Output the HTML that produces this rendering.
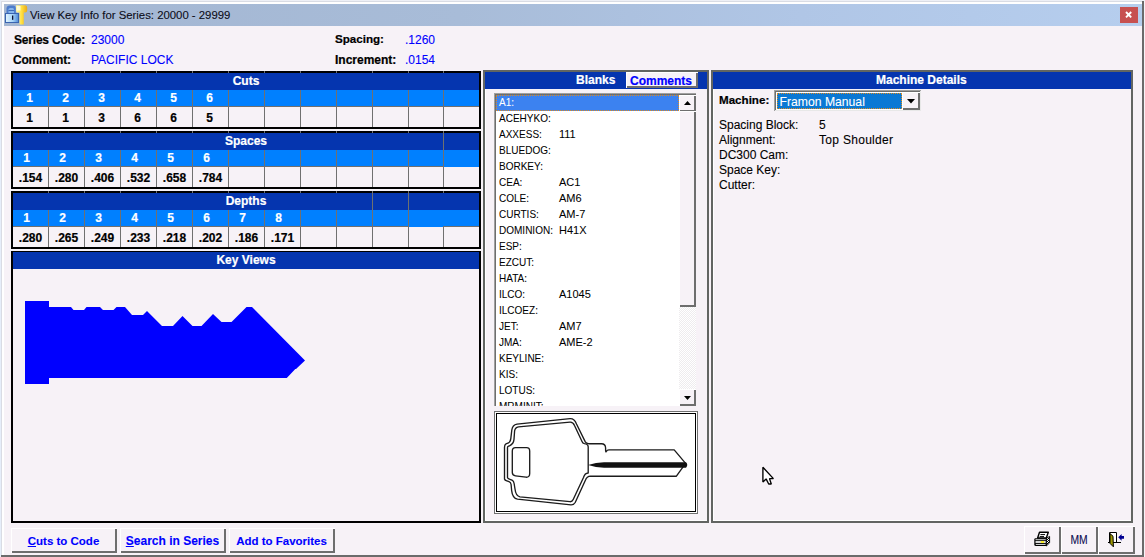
<!DOCTYPE html>
<html><head><meta charset="utf-8">
<style>
*{margin:0;padding:0;box-sizing:border-box}
html,body{width:1145px;height:557px;overflow:hidden;background:#F7F2F7;font-family:"Liberation Sans",sans-serif;font-size:12px;color:#000}
.a{position:absolute}
.t{position:absolute;white-space:nowrap;line-height:14px;-webkit-text-stroke:0.1px currentColor}
.b{font-weight:bold;-webkit-text-stroke:0.2px currentColor}
.blue{color:#0000FF}
.w{color:#fff}
svg{position:absolute;overflow:visible}
</style></head>
<body>
<div class="a" style="left:0px;top:0px;width:1145px;height:557px;background:#F7F2F7;"></div>
<div class="a" style="left:0px;top:0px;width:1145px;height:1px;background:#EEF0F6;"></div>
<div class="a" style="left:0px;top:0px;width:1px;height:557px;background:#E6EEFA;"></div>
<div class="a" style="left:1px;top:1px;width:1141px;height:1px;background:#D9DCE4;"></div>
<div class="a" style="left:1px;top:1px;width:1px;height:554px;background:#D9DCE4;"></div>
<div class="a" style="left:2px;top:2px;width:1140px;height:2px;background:#FFFFFF;"></div>
<div class="a" style="left:2px;top:2px;width:2px;height:553px;background:#FFFFFF;"></div>
<div class="a" style="left:1142px;top:1px;width:2px;height:556px;background:#6B6B6B;"></div>
<div class="a" style="left:1px;top:555px;width:1143px;height:2px;background:#6B6B6B;"></div>
<div class="a" style="left:4px;top:4px;width:1138px;height:22px;background:linear-gradient(to right,#A3B6D2 0%,#A8BCD8 40%,#B0C6E6 70%,#B6CEEE 100%);"></div>
<div class="t " style="left:30px;top:8px;font-size:11.35px;color:#0C0C18;-webkit-text-stroke:0.1px #0C0C18;top:7.5px">View Key Info for Series: 20000 - 29999</div>
<div class="a" style="left:1120px;top:7px;width:18px;height:16px;background:#C75050;"></div>
<svg style="left:0;top:0" width="1145" height="40"><path d="M1126 12 L1131.2 17.4 M1131.2 12 L1126 17.4" stroke="#fff" stroke-width="1.9"/></svg>
<svg style="left:0;top:0" width="40" height="30" viewBox="0 0 40 30">
<defs>
<linearGradient id="lk" x1="0" x2="1" y1="0" y2="0"><stop offset="0" stop-color="#E4F6FF"/><stop offset="0.55" stop-color="#A8D4F8"/><stop offset="1" stop-color="#4C88D8"/></linearGradient>
<linearGradient id="ky" x1="0" x2="1" y1="0" y2="0"><stop offset="0" stop-color="#FFF8B0"/><stop offset="0.5" stop-color="#FFE040"/><stop offset="1" stop-color="#E8A818"/></linearGradient>
</defs>
<path d="M6.5 13.5 V8.5 Q6.5 5.5 10 5.5 H13 Q15.8 5.5 15.8 8.5 V13.5 Z" fill="#4C7CCC"/>
<path d="M8.5 13.5 V9.5 Q8.5 8 10.2 8 H12.6 Q14 8 14 9.5 V13.5 Z" fill="#86B4EC"/>
<path d="M8.5 10.5 H14" stroke="#3E6AB8" stroke-width="1"/>
<rect x="5.5" y="13.5" width="13" height="9" fill="url(#lk)" stroke="#3A64B0" stroke-width="1"/>
<rect x="12" y="15.5" width="1.3" height="4.3" fill="#0A1030"/>
<path d="M16.5 5.2 H25 Q27.2 5.2 27.2 8 V10 Q27.2 12.6 24.5 12.6 H23.8 V24.6 H19.6 V12.6 H18.8 Q16 12.6 16 10 V6 Q16 5.2 16.5 5.2 Z" fill="url(#ky)"/>
<path d="M17 6 H20.5 V10.5 H17 Z" fill="#FFFFF0" opacity="0.75"/>
</svg>
<div class="t b" style="left:14px;top:33px;letter-spacing:-0.2px">Series Code:</div>
<div class="t blue" style="left:91px;top:33px;">23000</div>
<div class="t b" style="left:13px;top:53px;letter-spacing:-0.2px">Comment:</div>
<div class="t blue" style="left:91px;top:53px;">PACIFIC LOCK</div>
<div class="t b" style="left:335px;top:32px;font-size:11.6px">Spacing:</div>
<div class="t blue" style="left:405px;top:33px;">.1260</div>
<div class="t b" style="left:335px;top:53px;">Increment:</div>
<div class="t blue" style="left:405px;top:53px;">.0154</div>
<div class="a" style="left:11px;top:71px;width:470px;height:58px;background:#000;"></div>
<div class="a" style="left:13px;top:73px;width:466px;height:17px;background:#0535AF;"></div>
<div class="a" style="left:13px;top:90px;width:466px;height:17px;background:#0080FF;"></div>
<div class="a" style="left:13px;top:106px;width:466px;height:1px;background:#707070;"></div>
<div class="a" style="left:13px;top:107px;width:466px;height:20px;background:#F7F2F7;"></div>
<div class="a" style="left:48px;top:71px;width:1px;height:2px;background:#707070;"></div>
<div class="a" style="left:48px;top:90px;width:1px;height:37px;background:#707070;"></div>
<div class="a" style="left:84px;top:71px;width:1px;height:2px;background:#707070;"></div>
<div class="a" style="left:84px;top:90px;width:1px;height:37px;background:#707070;"></div>
<div class="a" style="left:120px;top:71px;width:1px;height:2px;background:#707070;"></div>
<div class="a" style="left:120px;top:90px;width:1px;height:37px;background:#707070;"></div>
<div class="a" style="left:156px;top:71px;width:1px;height:2px;background:#707070;"></div>
<div class="a" style="left:156px;top:90px;width:1px;height:37px;background:#707070;"></div>
<div class="a" style="left:192px;top:71px;width:1px;height:2px;background:#707070;"></div>
<div class="a" style="left:192px;top:90px;width:1px;height:37px;background:#707070;"></div>
<div class="a" style="left:228px;top:71px;width:1px;height:2px;background:#707070;"></div>
<div class="a" style="left:228px;top:90px;width:1px;height:37px;background:#707070;"></div>
<div class="a" style="left:264px;top:71px;width:1px;height:2px;background:#707070;"></div>
<div class="a" style="left:264px;top:90px;width:1px;height:37px;background:#707070;"></div>
<div class="a" style="left:300px;top:71px;width:1px;height:2px;background:#707070;"></div>
<div class="a" style="left:300px;top:90px;width:1px;height:37px;background:#707070;"></div>
<div class="a" style="left:336px;top:71px;width:1px;height:2px;background:#707070;"></div>
<div class="a" style="left:336px;top:90px;width:1px;height:37px;background:#707070;"></div>
<div class="a" style="left:372px;top:71px;width:1px;height:2px;background:#707070;"></div>
<div class="a" style="left:372px;top:90px;width:1px;height:37px;background:#707070;"></div>
<div class="a" style="left:408px;top:71px;width:1px;height:2px;background:#707070;"></div>
<div class="a" style="left:408px;top:90px;width:1px;height:37px;background:#707070;"></div>
<div class="a" style="left:443px;top:71px;width:1px;height:2px;background:#707070;"></div>
<div class="a" style="left:443px;top:90px;width:1px;height:37px;background:#707070;"></div>
<div class="t b w" style="left:13px;top:74px;width:466px;text-align:center;">Cuts</div>
<div class="t b w" style="left:12px;top:91px;width:35px;text-align:center;">1</div>
<div class="t b w" style="left:48px;top:91px;width:35px;text-align:center;">2</div>
<div class="t b w" style="left:84px;top:91px;width:35px;text-align:center;">3</div>
<div class="t b w" style="left:120px;top:91px;width:35px;text-align:center;">4</div>
<div class="t b w" style="left:156px;top:91px;width:35px;text-align:center;">5</div>
<div class="t b w" style="left:192px;top:91px;width:35px;text-align:center;">6</div>
<div class="t b" style="left:12px;top:111px;width:35px;text-align:center;">1</div>
<div class="t b" style="left:48px;top:111px;width:35px;text-align:center;">1</div>
<div class="t b" style="left:84px;top:111px;width:35px;text-align:center;">3</div>
<div class="t b" style="left:120px;top:111px;width:35px;text-align:center;">6</div>
<div class="t b" style="left:156px;top:111px;width:35px;text-align:center;">6</div>
<div class="t b" style="left:192px;top:111px;width:35px;text-align:center;">5</div>
<div class="a" style="left:11px;top:131px;width:470px;height:58px;background:#000;"></div>
<div class="a" style="left:13px;top:133px;width:466px;height:17px;background:#0535AF;"></div>
<div class="a" style="left:13px;top:150px;width:466px;height:17px;background:#0080FF;"></div>
<div class="a" style="left:13px;top:166px;width:430px;height:1px;background:#707070;"></div>
<div class="a" style="left:479px;top:166px;width:0px;height:1px;background:#707070;"></div>
<div class="a" style="left:13px;top:167px;width:466px;height:20px;background:#F7F2F7;"></div>
<div class="a" style="left:48px;top:131px;width:1px;height:2px;background:#707070;"></div>
<div class="a" style="left:48px;top:150px;width:1px;height:37px;background:#707070;"></div>
<div class="a" style="left:84px;top:131px;width:1px;height:2px;background:#707070;"></div>
<div class="a" style="left:84px;top:150px;width:1px;height:37px;background:#707070;"></div>
<div class="a" style="left:120px;top:131px;width:1px;height:2px;background:#707070;"></div>
<div class="a" style="left:120px;top:150px;width:1px;height:37px;background:#707070;"></div>
<div class="a" style="left:156px;top:131px;width:1px;height:2px;background:#707070;"></div>
<div class="a" style="left:156px;top:150px;width:1px;height:37px;background:#707070;"></div>
<div class="a" style="left:192px;top:131px;width:1px;height:2px;background:#707070;"></div>
<div class="a" style="left:192px;top:150px;width:1px;height:37px;background:#707070;"></div>
<div class="a" style="left:228px;top:131px;width:1px;height:2px;background:#707070;"></div>
<div class="a" style="left:228px;top:150px;width:1px;height:37px;background:#707070;"></div>
<div class="a" style="left:264px;top:131px;width:1px;height:2px;background:#707070;"></div>
<div class="a" style="left:264px;top:150px;width:1px;height:37px;background:#707070;"></div>
<div class="a" style="left:300px;top:131px;width:1px;height:2px;background:#707070;"></div>
<div class="a" style="left:300px;top:150px;width:1px;height:37px;background:#707070;"></div>
<div class="a" style="left:336px;top:131px;width:1px;height:2px;background:#707070;"></div>
<div class="a" style="left:336px;top:150px;width:1px;height:37px;background:#707070;"></div>
<div class="a" style="left:372px;top:131px;width:1px;height:2px;background:#707070;"></div>
<div class="a" style="left:372px;top:150px;width:1px;height:37px;background:#707070;"></div>
<div class="a" style="left:408px;top:131px;width:1px;height:2px;background:#707070;"></div>
<div class="a" style="left:408px;top:150px;width:1px;height:37px;background:#707070;"></div>
<div class="a" style="left:443px;top:131px;width:1px;height:2px;background:#707070;"></div>
<div class="a" style="left:443px;top:133px;width:1px;height:54px;background:#707070;"></div>
<div class="t b w" style="left:13px;top:134px;width:466px;text-align:center;">Spaces</div>
<div class="t b w" style="left:9px;top:151px;width:35px;text-align:center;">1</div>
<div class="t b w" style="left:45px;top:151px;width:35px;text-align:center;">2</div>
<div class="t b w" style="left:81px;top:151px;width:35px;text-align:center;">3</div>
<div class="t b w" style="left:117px;top:151px;width:35px;text-align:center;">4</div>
<div class="t b w" style="left:153px;top:151px;width:35px;text-align:center;">5</div>
<div class="t b w" style="left:189px;top:151px;width:35px;text-align:center;">6</div>
<div class="t b" style="left:13px;top:171px;width:35px;text-align:center;">.154</div>
<div class="t b" style="left:49px;top:171px;width:35px;text-align:center;">.280</div>
<div class="t b" style="left:85px;top:171px;width:35px;text-align:center;">.406</div>
<div class="t b" style="left:121px;top:171px;width:35px;text-align:center;">.532</div>
<div class="t b" style="left:157px;top:171px;width:35px;text-align:center;">.658</div>
<div class="t b" style="left:193px;top:171px;width:35px;text-align:center;">.784</div>
<div class="a" style="left:11px;top:191px;width:470px;height:58px;background:#000;"></div>
<div class="a" style="left:13px;top:193px;width:466px;height:17px;background:#0535AF;"></div>
<div class="a" style="left:13px;top:210px;width:466px;height:17px;background:#0080FF;"></div>
<div class="a" style="left:13px;top:226px;width:395px;height:1px;background:#707070;"></div>
<div class="a" style="left:443px;top:226px;width:36px;height:1px;background:#707070;"></div>
<div class="a" style="left:13px;top:227px;width:466px;height:20px;background:#F7F2F7;"></div>
<div class="a" style="left:48px;top:191px;width:1px;height:2px;background:#707070;"></div>
<div class="a" style="left:48px;top:210px;width:1px;height:37px;background:#707070;"></div>
<div class="a" style="left:84px;top:191px;width:1px;height:2px;background:#707070;"></div>
<div class="a" style="left:84px;top:210px;width:1px;height:37px;background:#707070;"></div>
<div class="a" style="left:120px;top:191px;width:1px;height:2px;background:#707070;"></div>
<div class="a" style="left:120px;top:210px;width:1px;height:37px;background:#707070;"></div>
<div class="a" style="left:156px;top:191px;width:1px;height:2px;background:#707070;"></div>
<div class="a" style="left:156px;top:210px;width:1px;height:37px;background:#707070;"></div>
<div class="a" style="left:192px;top:191px;width:1px;height:2px;background:#707070;"></div>
<div class="a" style="left:192px;top:210px;width:1px;height:37px;background:#707070;"></div>
<div class="a" style="left:228px;top:191px;width:1px;height:2px;background:#707070;"></div>
<div class="a" style="left:228px;top:210px;width:1px;height:37px;background:#707070;"></div>
<div class="a" style="left:264px;top:191px;width:1px;height:2px;background:#707070;"></div>
<div class="a" style="left:264px;top:210px;width:1px;height:37px;background:#707070;"></div>
<div class="a" style="left:300px;top:191px;width:1px;height:2px;background:#707070;"></div>
<div class="a" style="left:300px;top:210px;width:1px;height:37px;background:#707070;"></div>
<div class="a" style="left:336px;top:191px;width:1px;height:2px;background:#707070;"></div>
<div class="a" style="left:336px;top:210px;width:1px;height:37px;background:#707070;"></div>
<div class="a" style="left:372px;top:191px;width:1px;height:2px;background:#707070;"></div>
<div class="a" style="left:372px;top:193px;width:1px;height:54px;background:#707070;"></div>
<div class="a" style="left:408px;top:191px;width:1px;height:2px;background:#707070;"></div>
<div class="a" style="left:408px;top:193px;width:1px;height:54px;background:#707070;"></div>
<div class="a" style="left:443px;top:191px;width:1px;height:2px;background:#707070;"></div>
<div class="a" style="left:443px;top:226px;width:1px;height:21px;background:#707070;"></div>
<div class="t b w" style="left:13px;top:194px;width:466px;text-align:center;">Depths</div>
<div class="t b w" style="left:9px;top:211px;width:35px;text-align:center;">1</div>
<div class="t b w" style="left:45px;top:211px;width:35px;text-align:center;">2</div>
<div class="t b w" style="left:81px;top:211px;width:35px;text-align:center;">3</div>
<div class="t b w" style="left:117px;top:211px;width:35px;text-align:center;">4</div>
<div class="t b w" style="left:153px;top:211px;width:35px;text-align:center;">5</div>
<div class="t b w" style="left:189px;top:211px;width:35px;text-align:center;">6</div>
<div class="t b w" style="left:225px;top:211px;width:35px;text-align:center;">7</div>
<div class="t b w" style="left:261px;top:211px;width:35px;text-align:center;">8</div>
<div class="t b" style="left:13px;top:231px;width:35px;text-align:center;">.280</div>
<div class="t b" style="left:49px;top:231px;width:35px;text-align:center;">.265</div>
<div class="t b" style="left:85px;top:231px;width:35px;text-align:center;">.249</div>
<div class="t b" style="left:121px;top:231px;width:35px;text-align:center;">.233</div>
<div class="t b" style="left:157px;top:231px;width:35px;text-align:center;">.218</div>
<div class="t b" style="left:193px;top:231px;width:35px;text-align:center;">.202</div>
<div class="t b" style="left:229px;top:231px;width:35px;text-align:center;">.186</div>
<div class="t b" style="left:265px;top:231px;width:35px;text-align:center;">.171</div>
<div class="a" style="left:11px;top:251px;width:470px;height:272px;background:#000;"></div>
<div class="a" style="left:13px;top:252px;width:466px;height:17px;background:#0535AF;"></div>
<div class="a" style="left:13px;top:269px;width:466px;height:252px;background:#F7F2F7;"></div>
<div class="t b w" style="left:13px;top:253px;width:466px;text-align:center;">Key Views</div>
<svg style="left:0;top:0" width="1145" height="557" viewBox="0 0 1145 557">
<path fill="#0000FF" d="M25 301 H49 V307 H71 L73.5 310 H84 L86.5 307 H100 L103 310 H113.5 L116.5 307 H125 L132 315 H143 L147 311 L162 326 H173 L182.5 316 L192.5 326 H201.5 L213 314 L221.5 322 H231.5 L246.5 307 H252 L305 360.5 L296 369 H295.3 L286.8 378 H49 V384 H25 Z"/>
</svg>
<div class="a" style="left:11px;top:528px;width:106px;height:25px;background:#FFFFFF;"></div>
<div class="a" style="left:12px;top:529px;width:105px;height:24px;background:#6E6E6E;"></div>
<div class="a" style="left:12px;top:529px;width:103px;height:22px;background:#F7F2F7;"></div>
<div class="t" style="left:11px;top:528px;width:105px;height:24px;display:flex;align-items:center;justify-content:center;font-weight:bold;color:#0000FF;font-size:11.5px;padding-top:1px"><u>C</u>uts to Code</div>
<div class="a" style="left:120px;top:528px;width:106px;height:25px;background:#FFFFFF;"></div>
<div class="a" style="left:121px;top:529px;width:105px;height:24px;background:#6E6E6E;"></div>
<div class="a" style="left:121px;top:529px;width:103px;height:22px;background:#F7F2F7;"></div>
<div class="t" style="left:120px;top:528px;width:105px;height:24px;display:flex;align-items:center;justify-content:center;font-weight:bold;color:#0000FF;font-size:12px;padding-top:1px"><u>S</u>earch in Series</div>
<div class="a" style="left:229px;top:528px;width:106px;height:25px;background:#FFFFFF;"></div>
<div class="a" style="left:230px;top:529px;width:105px;height:24px;background:#6E6E6E;"></div>
<div class="a" style="left:230px;top:529px;width:103px;height:22px;background:#F7F2F7;"></div>
<div class="t" style="left:229px;top:528px;width:105px;height:24px;display:flex;align-items:center;justify-content:center;font-weight:bold;color:#0000FF;font-size:11.5px;padding-top:1px">Add to Favorites</div>
<div class="a" style="left:483px;top:70px;width:226px;height:453px;background:#626562;"></div>
<div class="a" style="left:485px;top:72px;width:222px;height:449px;background:#FFFFFF;"></div>
<div class="a" style="left:486px;top:72px;width:221px;height:448px;background:#F7F2F7;"></div>
<div class="a" style="left:485px;top:72px;width:222px;height:17px;background:#0535AF;"></div>
<div class="t b w" style="left:576px;top:73px;">Blanks</div>
<div class="a" style="left:626px;top:72px;width:72px;height:16px;background:#FFFFFF;"></div>
<div class="a" style="left:627px;top:73px;width:71px;height:15px;background:#6E6E6E;"></div>
<div class="a" style="left:627px;top:73px;width:69px;height:13px;background:#F7F2F7;"></div>
<div class="t b blue" style="left:630px;top:74px;">Comments</div>
<div class="a" style="left:494px;top:93px;width:202px;height:313px;background:#A0A0A0;"></div>
<div class="a" style="left:495px;top:94px;width:201px;height:312px;background:#6E6E6E;"></div>
<div class="a" style="left:496px;top:95px;width:183px;height:311px;background:#FFFFFF;"></div>
<div class="a" style="left:496px;top:95px;width:183px;height:16px;background:#3C82F0;"></div>
<div class="a" style="left:496px;top:95px;width:183px;height:16px;border:1px dotted #E08A1E"></div>
<div class="a" style="left:496px;top:95px;width:183px;height:311px;overflow:hidden">
<div class="t" style="left:3px;top:0px;font-size:11px;color:#FFFFFF;transform:scaleX(0.91);transform-origin:0 0;-webkit-text-stroke:0.05px #FFFFFF">A1:</div>
<div class="t" style="left:3px;top:16px;font-size:11px;color:#000000;transform:scaleX(0.91);transform-origin:0 0;-webkit-text-stroke:0.05px #000000">ACEHYKO:</div>
<div class="t" style="left:3px;top:32px;font-size:11px;color:#000000;transform:scaleX(0.91);transform-origin:0 0;-webkit-text-stroke:0.05px #000000">AXXESS:</div>
<div class="t" style="left:63px;top:32px;font-size:11px;color:#000000;-webkit-text-stroke:0.05px #000000">111</div>
<div class="t" style="left:3px;top:48px;font-size:11px;color:#000000;transform:scaleX(0.91);transform-origin:0 0;-webkit-text-stroke:0.05px #000000">BLUEDOG:</div>
<div class="t" style="left:3px;top:64px;font-size:11px;color:#000000;transform:scaleX(0.91);transform-origin:0 0;-webkit-text-stroke:0.05px #000000">BORKEY:</div>
<div class="t" style="left:3px;top:80px;font-size:11px;color:#000000;transform:scaleX(0.91);transform-origin:0 0;-webkit-text-stroke:0.05px #000000">CEA:</div>
<div class="t" style="left:63px;top:80px;font-size:11px;color:#000000;-webkit-text-stroke:0.05px #000000">AC1</div>
<div class="t" style="left:3px;top:96px;font-size:11px;color:#000000;transform:scaleX(0.91);transform-origin:0 0;-webkit-text-stroke:0.05px #000000">COLE:</div>
<div class="t" style="left:63px;top:96px;font-size:11px;color:#000000;-webkit-text-stroke:0.05px #000000">AM6</div>
<div class="t" style="left:3px;top:112px;font-size:11px;color:#000000;transform:scaleX(0.91);transform-origin:0 0;-webkit-text-stroke:0.05px #000000">CURTIS:</div>
<div class="t" style="left:63px;top:112px;font-size:11px;color:#000000;-webkit-text-stroke:0.05px #000000">AM-7</div>
<div class="t" style="left:3px;top:128px;font-size:11px;color:#000000;transform:scaleX(0.91);transform-origin:0 0;-webkit-text-stroke:0.05px #000000">DOMINION:</div>
<div class="t" style="left:63px;top:128px;font-size:11px;color:#000000;-webkit-text-stroke:0.05px #000000">H41X</div>
<div class="t" style="left:3px;top:144px;font-size:11px;color:#000000;transform:scaleX(0.91);transform-origin:0 0;-webkit-text-stroke:0.05px #000000">ESP:</div>
<div class="t" style="left:3px;top:160px;font-size:11px;color:#000000;transform:scaleX(0.91);transform-origin:0 0;-webkit-text-stroke:0.05px #000000">EZCUT:</div>
<div class="t" style="left:3px;top:176px;font-size:11px;color:#000000;transform:scaleX(0.91);transform-origin:0 0;-webkit-text-stroke:0.05px #000000">HATA:</div>
<div class="t" style="left:3px;top:192px;font-size:11px;color:#000000;transform:scaleX(0.91);transform-origin:0 0;-webkit-text-stroke:0.05px #000000">ILCO:</div>
<div class="t" style="left:63px;top:192px;font-size:11px;color:#000000;-webkit-text-stroke:0.05px #000000">A1045</div>
<div class="t" style="left:3px;top:208px;font-size:11px;color:#000000;transform:scaleX(0.91);transform-origin:0 0;-webkit-text-stroke:0.05px #000000">ILCOEZ:</div>
<div class="t" style="left:3px;top:224px;font-size:11px;color:#000000;transform:scaleX(0.91);transform-origin:0 0;-webkit-text-stroke:0.05px #000000">JET:</div>
<div class="t" style="left:63px;top:224px;font-size:11px;color:#000000;-webkit-text-stroke:0.05px #000000">AM7</div>
<div class="t" style="left:3px;top:240px;font-size:11px;color:#000000;transform:scaleX(0.91);transform-origin:0 0;-webkit-text-stroke:0.05px #000000">JMA:</div>
<div class="t" style="left:63px;top:240px;font-size:11px;color:#000000;-webkit-text-stroke:0.05px #000000">AME-2</div>
<div class="t" style="left:3px;top:256px;font-size:11px;color:#000000;transform:scaleX(0.91);transform-origin:0 0;-webkit-text-stroke:0.05px #000000">KEYLINE:</div>
<div class="t" style="left:3px;top:272px;font-size:11px;color:#000000;transform:scaleX(0.91);transform-origin:0 0;-webkit-text-stroke:0.05px #000000">KIS:</div>
<div class="t" style="left:3px;top:288px;font-size:11px;color:#000000;transform:scaleX(0.91);transform-origin:0 0;-webkit-text-stroke:0.05px #000000">LOTUS:</div>
<div class="t" style="left:3px;top:304px;font-size:11px;color:#000000;transform:scaleX(0.91);transform-origin:0 0;-webkit-text-stroke:0.05px #000000">MRMINIT:</div>
</div>
<div class="a" style="left:679px;top:111px;width:17px;height:295px;background:repeating-conic-gradient(#EEECEE 0 25%, #FFFFFF 0 50%) 0 0/2px 2px"></div>
<div class="a" style="left:679px;top:95px;width:17px;height:17px;background:#FFFFFF;"></div>
<div class="a" style="left:680px;top:96px;width:16px;height:16px;background:#6E6E6E;"></div>
<div class="a" style="left:680px;top:96px;width:14px;height:14px;background:#F7F2F7;"></div>
<div class="a" style="left:679px;top:111px;width:17px;height:196px;background:#FFFFFF;"></div>
<div class="a" style="left:680px;top:112px;width:16px;height:195px;background:#6E6E6E;"></div>
<div class="a" style="left:680px;top:112px;width:14px;height:193px;background:#F7F2F7;"></div>
<div class="a" style="left:679px;top:389px;width:17px;height:17px;background:#FFFFFF;"></div>
<div class="a" style="left:680px;top:390px;width:16px;height:16px;background:#6E6E6E;"></div>
<div class="a" style="left:680px;top:390px;width:14px;height:14px;background:#F7F2F7;"></div>
<svg style="left:0;top:0" width="1145" height="557"><path d="M684 105 L687.5 101 L691 105 Z" fill="#000"/><path d="M684 396 L691 396 L687.5 400 Z" fill="#000"/></svg>
<div class="a" style="left:494px;top:411px;width:204px;height:103px;background:#707070;"></div>
<div class="a" style="left:495px;top:412px;width:202px;height:101px;background:#FFFFFF;"></div>
<div class="a" style="left:496px;top:413px;width:200px;height:99px;background:#000000;"></div>
<div class="a" style="left:497px;top:414px;width:198px;height:97px;background:#FFFFFF;"></div>
<svg style="left:0;top:0" width="1145" height="557" viewBox="0 0 1145 557">
<g fill="none" stroke="#1C1C1C" stroke-width="1.35" stroke-linejoin="round">
<path d="M504.5 447.3 V479 Q504.8 480.3 506.8 480.8 L509 481.6 Q510.8 482.3 511.1 484.5 L511.6 490.3 Q512.5 498.2 517.5 499.2 L571 504.9 Q573.8 505 575.2 502.5 L585.5 480 Q586.8 476.4 590.5 476.2 H676.4 L685.6 463.4 L674.2 449.9 H609 Q607 450 606.3 451.5 Q605.8 452.5 605.6 450.5 V448 Q605.5 443.7 601.5 443.7 H588.5 Q586.3 443.5 585.3 441.9 L576.5 424 Q574.5 418.4 570 418.6 L517 424.2 Q512.5 425 511.8 430 L510.8 438.7 Q510.4 442.6 507.2 443.4 L506 443.8 Q504.5 444.6 504.5 447.3 Z"/>
<path d="M507.5 447.5 V477.7 Q507.7 478.8 509.9 479.3 L512 480.2 Q513.8 481.2 514.1 483.5 L515 489 Q515.8 496.2 520 496.8 L570 501.7 Q572.2 501.8 573.2 499.5 L583.5 477.5 Q584.8 473.2 588.2 473 V446.9 Q588 444.2 584.4 443.7 Q582.7 443.3 581.9 441.2 L574.5 425.5 Q573 422 570 422.2 L518.5 426.8 Q515 427.4 514.6 431 L514 439.4 Q513.6 444 509.5 445.8 L508.6 446.2 Q507.5 446.7 507.5 447.5 Z"/>
<path d="M515.5 447.6 H526 Q529.7 447.2 529.7 451 V473.5 Q529.7 477.4 526 477.2 L515.5 475.8 Q512.3 475.5 512.3 472.5 V451 Q512.3 447.6 515.5 447.6 Z"/>
</g>
<path d="M588 465 Q596 462.3 604 462.3 H686 Q688.5 465 686 467.7 H604 Q596 467.7 588 465 Z" fill="#111"/>
</svg>
<div class="a" style="left:711px;top:70px;width:422px;height:453px;background:#626562;"></div>
<div class="a" style="left:713px;top:72px;width:418px;height:449px;background:#FFFFFF;"></div>
<div class="a" style="left:714px;top:72px;width:417px;height:448px;background:#F7F2F7;"></div>
<div class="a" style="left:713px;top:72px;width:418px;height:17px;background:#0535AF;"></div>
<div class="t b w" style="left:876px;top:73px;">Machine Details</div>
<div class="t b" style="left:719px;top:93px;font-size:11.6px">Machine:</div>
<div class="a" style="left:774px;top:90px;width:147px;height:21px;background:#A0A0A0;"></div>
<div class="a" style="left:775px;top:91px;width:146px;height:20px;background:#E8E8E8;"></div>
<div class="a" style="left:775px;top:91px;width:145px;height:19px;background:#6E6E6E;"></div>
<div class="a" style="left:776px;top:92px;width:144px;height:18px;background:#FFFFFF;"></div>
<div class="a" style="left:777px;top:93px;width:125px;height:16px;background:#0A78D4;"></div>
<div class="a" style="left:777px;top:93px;width:125px;height:16px;border:1px dotted #E08A1E"></div>
<div class="t w" style="left:779.5px;top:94.5px;font-size:12.2px">Framon Manual</div>
<div class="a" style="left:902px;top:92px;width:18px;height:18px;background:#FFFFFF;"></div>
<div class="a" style="left:903px;top:93px;width:17px;height:17px;background:#6E6E6E;"></div>
<div class="a" style="left:903px;top:93px;width:15px;height:15px;background:#F7F2F7;"></div>
<svg style="left:0;top:0" width="1145" height="557"><path d="M907 99 L915 99 L911 103.5 Z" fill="#000"/></svg>
<div class="t " style="left:719px;top:118px;">Spacing Block:</div>
<div class="t " style="left:819px;top:118px;letter-spacing:0.3px">5</div>
<div class="t " style="left:719px;top:133px;">Alignment:</div>
<div class="t " style="left:819px;top:133px;letter-spacing:0.3px">Top Shoulder</div>
<div class="t " style="left:719px;top:148px;">DC300 Cam:</div>
<div class="t " style="left:719px;top:163px;">Space Key:</div>
<div class="t " style="left:719px;top:178px;">Cutter:</div>
<div class="a" style="left:1024px;top:526px;width:37px;height:28px;background:#FFFFFF;"></div>
<div class="a" style="left:1025px;top:527px;width:36px;height:27px;background:#6E6E6E;"></div>
<div class="a" style="left:1025px;top:527px;width:34px;height:25px;background:#F7F2F7;"></div>
<div class="t" style="left:1024px;top:526px;width:36px;height:27px;display:flex;align-items:center;justify-content:center;"></div>
<div class="a" style="left:1061px;top:526px;width:37px;height:28px;background:#FFFFFF;"></div>
<div class="a" style="left:1062px;top:527px;width:36px;height:27px;background:#6E6E6E;"></div>
<div class="a" style="left:1062px;top:527px;width:34px;height:25px;background:#F7F2F7;"></div>
<div class="t" style="left:1061px;top:526px;width:36px;height:27px;display:flex;align-items:center;justify-content:center;font-size:12px;color:#0A0A50"><span style="display:inline-block;transform:scaleX(0.86);margin-left:-1px">MM</span></div>
<div class="a" style="left:1098px;top:526px;width:37px;height:28px;background:#FFFFFF;"></div>
<div class="a" style="left:1099px;top:527px;width:36px;height:27px;background:#6E6E6E;"></div>
<div class="a" style="left:1099px;top:527px;width:34px;height:25px;background:#F7F2F7;"></div>
<div class="t" style="left:1098px;top:526px;width:36px;height:27px;display:flex;align-items:center;justify-content:center;"></div>
<svg style="left:0;top:0" width="1145" height="557" viewBox="0 0 1145 557">
<defs><pattern id="chk" width="2" height="2" patternUnits="userSpaceOnUse"><rect width="2" height="2" fill="#fff"/><rect width="1" height="1" fill="#000"/><rect x="1" y="1" width="1" height="1" fill="#000"/></pattern></defs>
<path d="M1039.5 532.3 H1048.3 L1046.3 538 H1037.6 Z" fill="#fff" stroke="#000" stroke-width="1.4" stroke-linejoin="round"/>
<path d="M1040.4 534.6 H1045 M1039.7 536.6 H1044" stroke="#000" stroke-width="1"/>
<path d="M1046.3 538.4 L1049.6 536.4 V542.8 L1046.3 546 Z" fill="url(#chk)" stroke="#000" stroke-width="0.9"/>
<path d="M1035.5 538.3 H1046.6 V546.1 H1036 Q1034.3 546.1 1034.3 544.4 V539.5 Q1034.3 538.3 1035.5 538.3 Z" fill="#000"/>
<rect x="1035.5" y="539.3" width="10.2" height="0.9" fill="#F4F4F4"/>
<rect x="1035.5" y="541" width="10.2" height="2.1" fill="#D8D8D8"/>
<rect x="1040.8" y="541.2" width="3.3" height="1.6" fill="#FFF000"/>
<rect x="1035.8" y="544.1" width="9.8" height="0.9" fill="#E2E2E2"/>
<rect x="1109.5" y="532.5" width="7" height="10" fill="#fff"/>
<path d="M1109.5 542.5 V532.5 H1116.5 V542.5 M1108 542.5 H1121" fill="none" stroke="#000" stroke-width="1"/>
<path d="M1110 533.6 L1113 536.2 L1113.4 546.8 L1110 543.4 Z" fill="#A09A00" stroke="#000" stroke-width="1"/>
<path d="M1118.2 537.3 L1121.6 534 V536 H1124 V538.7 H1121.6 V540.7 Z" fill="#000090"/>
</svg>
<svg style="left:0;top:0" width="1145" height="557" viewBox="0 0 1145 557">
<path d="M762.9 467.2 V482 L766.1 478.9 L768.7 484 H771.3 L769.5 478.6 H773.4 Z" fill="#fff" stroke="#000" stroke-width="1.35" stroke-linejoin="bevel"/>
</svg>
</body></html>
